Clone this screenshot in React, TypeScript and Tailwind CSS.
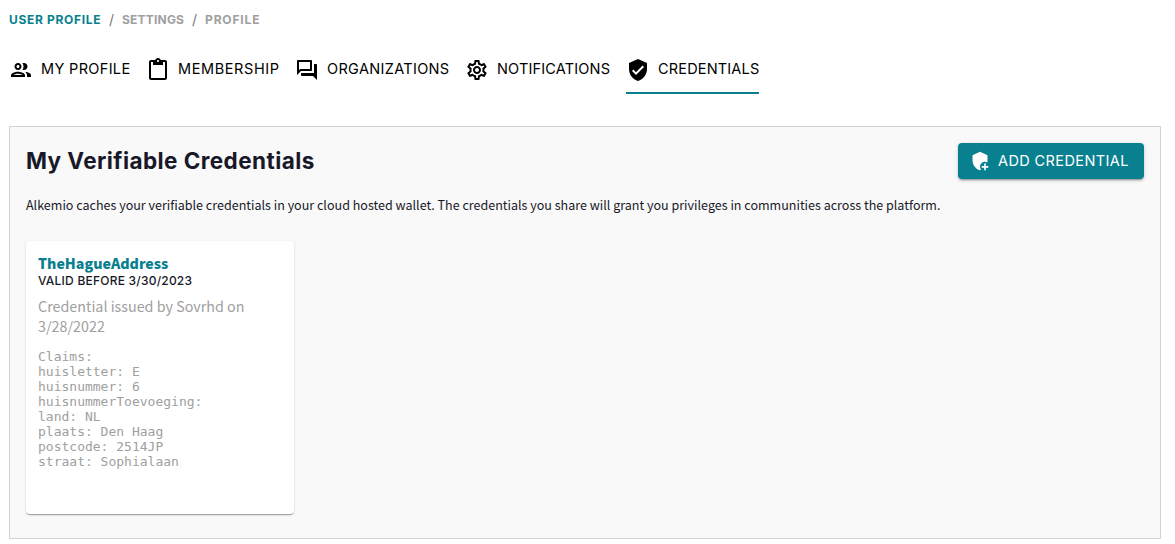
import type { IconType } from 'react-icons';
import {
  MdAddModerator,
  MdContentPaste,
  MdOutlineForum,
  MdOutlineGroup,
  MdOutlineSettings,
  MdVerifiedUser,
} from 'react-icons/md';

interface Tab {
  label: string;
  Icon: IconType;
  className: string;
}

const tabs: Tab[] = [
  { label: 'MY PROFILE', Icon: MdOutlineGroup, className: 'w-[121px] tracking-[0.34px]' },
  { label: 'MEMBERSHIP', Icon: MdContentPaste, className: 'w-[133px] tracking-[0.6px]' },
  { label: 'ORGANIZATIONS', Icon: MdOutlineForum, className: 'w-[154px] tracking-[0.33px]' },
  { label: 'NOTIFICATIONS', Icon: MdOutlineSettings, className: 'w-[145px] tracking-[0.17px]' },
  { label: 'CREDENTIALS', Icon: MdVerifiedUser, className: 'w-[133px] border-[#09808f] tracking-[0.17px]' },
];

const claims = [
  ['huisletter', 'E'],
  ['huisnummer', '6'],
  ['huisnummerToevoeging', ''],
  ['land', 'NL'],
  ['plaats', 'Den Haag'],
  ['postcode', '2514JP'],
  ['straat', 'Sophialaan'],
];

function Breadcrumbs() {
  return (
    <nav className="flex h-[15px] items-center whitespace-nowrap text-[12px] font-bold leading-[15px] text-[#a0a0a0]">
      <a className="w-[92px] tracking-[0.68px] text-[#09808f]">USER PROFILE</a>
      <span className="w-[21px] text-center text-[14px] font-normal text-[#777777]">/</span>
      <a className="w-[62px] tracking-[0.2px]">SETTINGS</a>
      <span className="w-[21px] text-center text-[14px] font-normal text-[#777777]">/</span>
      <a className="tracking-[0.85px]">PROFILE</a>
    </nav>
  );
}

function Tabs() {
  return (
    <div className="mt-[31px] flex gap-4 text-[14.5px] font-normal text-black">
      {tabs.map(({ label, Icon, className }) => (
        <div
          key={label}
          className={`flex h-9 items-start gap-2 whitespace-nowrap border-b-2 ${className} ${
            label === 'CREDENTIALS' ? '' : 'border-transparent'
          }`}
        >
          <Icon className="size-6 shrink-0" />
          <span className="leading-[22px]">{label}</span>
        </div>
      ))}
    </div>
  );
}

function CredentialCard() {
  return (
    <article className="mt-[26px] h-[273px] w-[268px] rounded bg-white px-3 pt-3 text-[#a0a0a0] shadow-[0_2px_1px_-1px_rgba(0,0,0,0.2),0_1px_1px_0_rgba(0,0,0,0.14),0_1px_3px_0_rgba(0,0,0,0.12)]">
      <h2 className="font-['Noto_Sans_CJK_SC',sans-serif] text-[14.2px] font-black leading-5 text-[#09808f]">
        TheHagueAddress
      </h2>
      <p className="mt-px whitespace-nowrap text-[12px] font-medium leading-[14px] tracking-[0.22px] text-[#181828]">
        VALID BEFORE 3/30/2023
      </p>
      <p className="mt-2 font-['Noto_Sans_CJK_SC',sans-serif] text-[14.32px] leading-5">
        Credential issued by Sovrhd on 3/28/2022
      </p>
      <pre className="mt-[13px] font-['DejaVu_Sans_Mono',monospace] text-[13px] leading-[15px]">
        {['Claims:', ...claims.map(([k, v]) => `${k}: ${v}`)].join('\n')}
      </pre>
    </article>
  );
}

export default function App() {
  return (
    <main className="h-[544px] overflow-hidden bg-white pl-[9px] pr-[14px] pt-3 font-['Inter',sans-serif]">
      <Breadcrumbs />
      <Tabs />
      <section className="mt-8 h-[413px] border border-[#d3d3d3] bg-[#f9f9f9] p-4">
        <header className="flex h-9 items-start justify-between">
          <h1 className="whitespace-nowrap text-[22.5px] font-bold leading-9 tracking-[0.43px] text-[#181828]">
            My Verifiable Credentials
          </h1>
          <button className="flex h-9 w-[186px] items-center gap-2 whitespace-nowrap rounded bg-[#09808f] pl-3 text-[14.5px] font-normal tracking-[0.4px] text-white shadow-[0_3px_1px_-2px_rgba(0,0,0,0.2),0_2px_2px_0_rgba(0,0,0,0.14),0_1px_5px_0_rgba(0,0,0,0.12)]">
            <MdAddModerator className="size-5" />
            <span className="leading-5">ADD CREDENTIAL</span>
          </button>
        </header>
        <p className="mt-4 whitespace-nowrap font-['Noto_Sans_CJK_SC',sans-serif] text-[12.54px] leading-5 text-[#181828]">
          Alkemio caches your verifiable credentials in your cloud hosted wallet. The credentials you share will grant
          you privileges in communities across the platform.
        </p>
        <CredentialCard />
      </section>
    </main>
  );
}
